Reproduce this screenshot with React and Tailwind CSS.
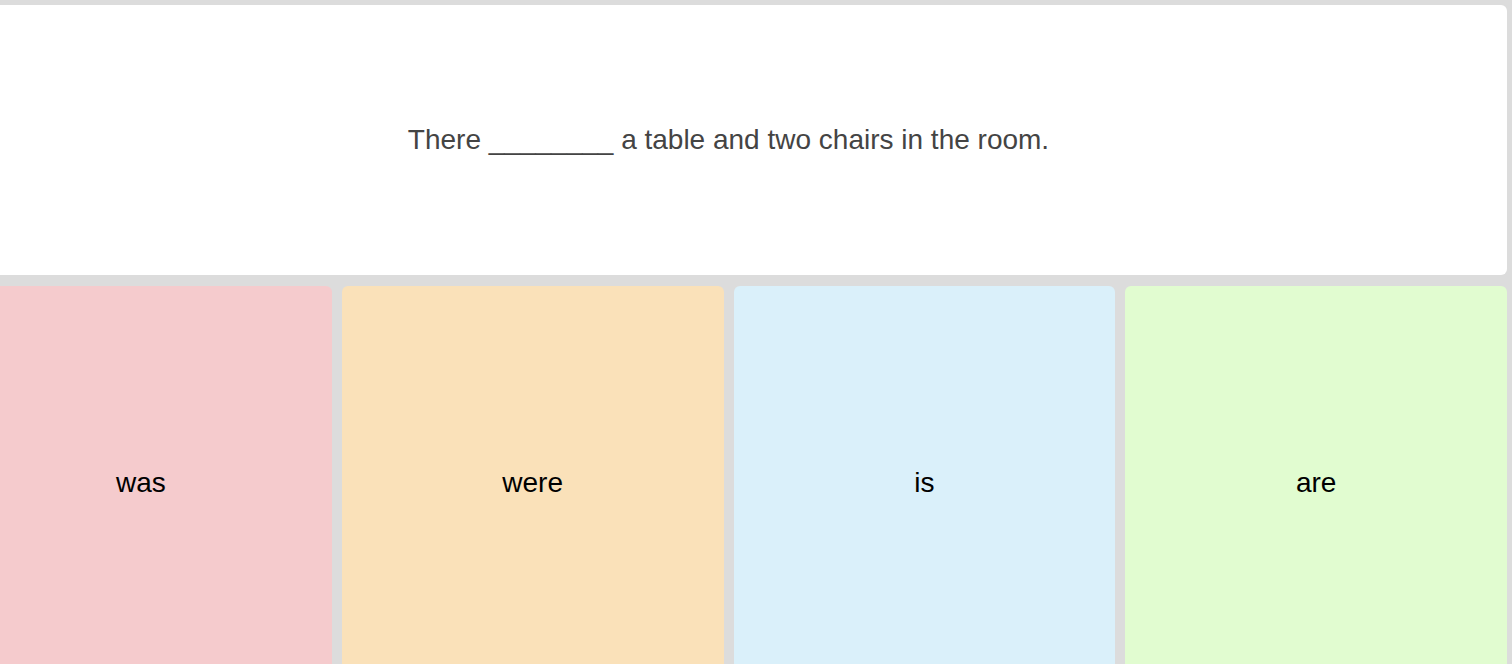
import React from "react";

const answers = [
  { text: "was", bg: "bg-[#f5cbcd]" },
  { text: "were", bg: "bg-[#fae1b9]" },
  { text: "is", bg: "bg-[#daf0fa]" },
  { text: "are", bg: "bg-[#e1fcd0]" },
];

const App = () => {
  return (
    <div className="h-[664px] overflow-hidden bg-[#dcdcdc] font-['Liberation_Sans',Arial,sans-serif]">
      <div className="ml-[-50px] mr-[5px] pt-[5px] flex flex-col gap-[11px]">
        {/* Question */}
        <div className="h-[270px] bg-white rounded-md flex items-center justify-center">
          <p className="text-[28px] text-[#444444]">
            There ________ a table and two chairs in the room.
          </p>
        </div>

        {/* Answers */}
        <div className="grid grid-cols-4 gap-[10px]">
          {answers.map((a, i) => (
            <div
              key={i}
              className={`h-[394px] rounded-md flex items-center justify-center ${a.bg}`}
            >
              <span className="text-[28px] text-black">{a.text}</span>
            </div>
          ))}
        </div>
      </div>
    </div>
  );
};

export default App;
